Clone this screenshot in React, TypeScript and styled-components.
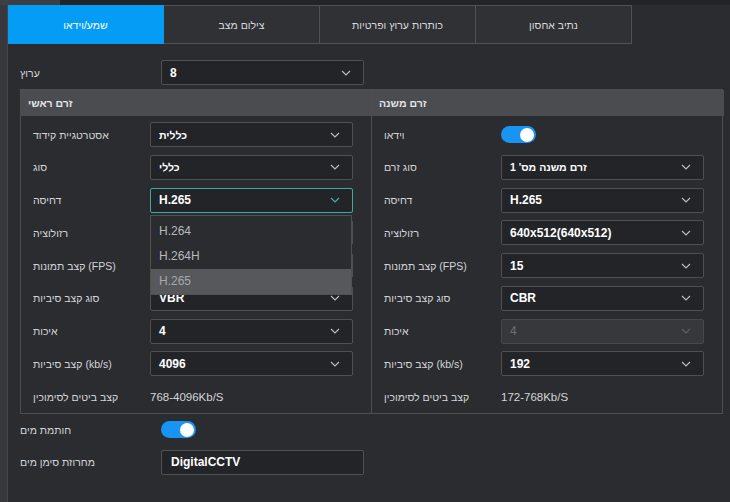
import React from "react";
import styled, { createGlobalStyle, css } from "styled-components";

const GlobalStyle = createGlobalStyle`
  html, body {
    margin: 0;
    padding: 0;
    background: #2a2c30;
  }
  body {
    font-family: "Liberation Sans", Arial, sans-serif;
    font-size: 10.5px;
    color: #d4d5d7;
  }
`;

const Page = styled.div`
  width: 730px;
  height: 502px;
  display: flex;
  flex-direction: column;
  overflow: hidden;
`;

const TopStrip = styled.div`
  height: 5px;
  flex: none;
  display: flex;
  background: #232427;
`;

const TopStripLeft = styled.div`
  width: 60px;
  background: #3c3e42;
`;

const Body = styled.div`
  flex: 1;
  display: flex;
`;

const SideStrip = styled.div`
  width: 7px;
  flex: none;
  background: #36383c;
  border-right: 1px solid #44464a;
`;

const Main = styled.div`
  flex: 1;
  display: flex;
  flex-direction: column;
`;

const Tabs = styled.div`
  display: flex;
  height: 39px;
`;

const Tab = styled.div<{ $active?: boolean }>`
  width: 156px;
  box-sizing: border-box;
  display: flex;
  align-items: center;
  justify-content: center;
  color: #d8d9db;
  font-size: 10.5px;
  background: #2f3135;
  border: 1px solid #505256;
  border-left: none;
  ${(p) =>
    p.$active &&
    css`
      background: #049cf5;
      color: #ffffff;
      border-color: #049cf5;
    `}
`;

const Content = styled.div`
  padding: 16px 0 0 12px;
  display: flex;
  flex-direction: column;
`;

const TopRow = styled.div`
  display: grid;
  grid-template-columns: 141px 203px;
  align-items: center;
  height: 25px;
`;

const Label = styled.span`
  color: #d4d5d7;
  font-size: 10.5px;
`;

const Panels = styled.div`
  margin-top: 4px;
  display: grid;
  grid-template-columns: 351px 352px;
  width: 703px;
  border: 1px solid #4c4e52;
  box-sizing: border-box;
`;

const Panel = styled.div<{ $last?: boolean }>`
  display: flex;
  flex-direction: column;
  border-right: ${(p) => (p.$last ? "none" : "1px solid #4c4e52")};
`;

const PanelHeader = styled.div`
  height: 26px;
  background: #4a4c50;
  display: flex;
  align-items: center;
  padding-left: 7px;
`;

const PanelTitle = styled.span`
  color: #e4e5e7;
  font-size: 10.5px;
  font-weight: bold;
`;

const PanelBody = styled.div`
  padding: 6px 0 4px 12px;
  display: grid;
  grid-template-columns: 117px 203px;
  grid-auto-rows: 25px;
  row-gap: 7.75px;
  align-items: center;
`;

const SelectBox = styled.div<{ $focused?: boolean; $disabled?: boolean; $he?: boolean }>`
  position: relative;
  height: 25px;
  box-sizing: border-box;
  display: flex;
  align-items: center;
  justify-content: space-between;
  padding: 0 12px 0 8px;
  background: #232428;
  border: 1px solid #4e5054;
  border-radius: 2px;
  color: #ffffff;
  font-weight: bold;
  font-size: ${(p) => (p.$he ? "10.5px" : "12px")};
  ${(p) =>
    p.$focused &&
    css`
      border-color: #3fa8a3;
    `}
  ${(p) =>
    p.$disabled &&
    css`
      background: #36383c;
      color: #6e7074;
      font-weight: normal;
      border-color: #46484c;
    `}
`;

const ValueText = styled.span``;

const Menu = styled.div`
  position: absolute;
  top: 26px;
  left: -1px;
  width: 202px;
  box-sizing: border-box;
  background: #2a2c30;
  border: 1px solid #4e5054;
  padding-top: 3px;
  z-index: 2;
  font-weight: normal;
`;

const MenuItem = styled.div<{ $selected?: boolean }>`
  height: 25px;
  display: flex;
  align-items: center;
  padding-left: 8px;
  font-size: 12px;
  background: ${(p) => (p.$selected ? "#56585c" : "transparent")};
  color: ${(p) => (p.$selected ? "#a8aaad" : "#b8babd")};
`;

const InfoText = styled.span`
  color: #d4d5d7;
  font-size: 11.5px;
`;

const ToggleTrack = styled.div`
  width: 35px;
  height: 17px;
  border-radius: 9px;
  background: #1894f2;
  position: relative;
`;

const ToggleKnob = styled.div`
  position: absolute;
  right: 2px;
  top: 1.5px;
  width: 14px;
  height: 14px;
  border-radius: 50%;
  background: #ffffff;
`;

const Bottom = styled.div`
  padding-top: 3px;
  display: grid;
  grid-template-columns: 141px 203px;
  grid-auto-rows: 25px;
  row-gap: 7.5px;
  align-items: center;
`;

const TextInput = styled.div`
  height: 25px;
  box-sizing: border-box;
  display: flex;
  align-items: center;
  padding-left: 9px;
  background: #232428;
  border: 1px solid #4e5054;
  border-radius: 2px;
  color: #ffffff;
  font-weight: bold;
  font-size: 12px;
`;

const Chevron: React.FC<{ color?: string }> = ({ color = "#b9bbbe" }) => (
  <svg width="10" height="6" viewBox="0 0 10 6">
    <path d="M1 1 L5 5 L9 1" fill="none" stroke={color} strokeWidth="1.2" />
  </svg>
);

type SelectProps = {
  value: string;
  focused?: boolean;
  disabled?: boolean;
  he?: boolean;
  options?: string[];
};

const Select: React.FC<SelectProps> = ({ value, focused, disabled, he, options }) => (
  <SelectBox $focused={focused} $disabled={disabled} $he={he}>
    <ValueText>{value}</ValueText>
    <Chevron color={focused ? "#3fb0aa" : disabled ? "#5e6064" : "#b9bbbe"} />
    {options && (
      <Menu>
        {options.map((o) => (
          <MenuItem key={o} $selected={o === value}>
            {o}
          </MenuItem>
        ))}
      </Menu>
    )}
  </SelectBox>
);

const Toggle = () => (
  <ToggleTrack>
    <ToggleKnob />
  </ToggleTrack>
);

const tabs = ["שמע/וידאו", "צילום מצב", "כותרות ערוץ ופרטיות", "נתיב אחסון"];

export default function App() {
  return (
    <Page>
      <GlobalStyle />
      <TopStrip>
        <TopStripLeft />
      </TopStrip>
      <Body>
        <SideStrip />
        <Main>
          <Tabs>
            {tabs.map((t, i) => (
              <Tab key={t} $active={i === 0}>
                {t}
              </Tab>
            ))}
          </Tabs>
          <Content>
            <TopRow>
              <Label>ערוץ</Label>
              <Select value="8" />
            </TopRow>
            <Panels>
              <Panel>
                <PanelHeader>
                  <PanelTitle>זרם ראשי</PanelTitle>
                </PanelHeader>
                <PanelBody>
                  <Label>אסטרטגיית קידוד</Label>
                  <Select value="כללית" he />
                  <Label>סוג</Label>
                  <Select value="כללי" he />
                  <Label>דחיסה</Label>
                  <Select value="H.265" focused options={["H.264", "H.264H", "H.265"]} />
                  <Label>רזולוציה</Label>
                  <Select value="640x512(640x512)" />
                  <Label>קצב תמונות (FPS)</Label>
                  <Select value="25" />
                  <Label>סוג קצב סיביות</Label>
                  <Select value="VBR" />
                  <Label>איכות</Label>
                  <Select value="4" />
                  <Label>קצב סיביות (kb/s)</Label>
                  <Select value="4096" />
                  <Label>קצב ביטים לסימוכין</Label>
                  <InfoText>768-4096Kb/S</InfoText>
                </PanelBody>
              </Panel>
              <Panel $last>
                <PanelHeader>
                  <PanelTitle>זרם משנה</PanelTitle>
                </PanelHeader>
                <PanelBody>
                  <Label>וידאו</Label>
                  <Toggle />
                  <Label>סוג זרם</Label>
                  <Select value="זרם משנה מס' 1" he />
                  <Label>דחיסה</Label>
                  <Select value="H.265" />
                  <Label>רזולוציה</Label>
                  <Select value="640x512(640x512)" />
                  <Label>קצב תמונות (FPS)</Label>
                  <Select value="15" />
                  <Label>סוג קצב סיביות</Label>
                  <Select value="CBR" />
                  <Label>איכות</Label>
                  <Select value="4" disabled />
                  <Label>קצב סיביות (kb/s)</Label>
                  <Select value="192" />
                  <Label>קצב ביטים לסימוכין</Label>
                  <InfoText>172-768Kb/S</InfoText>
                </PanelBody>
              </Panel>
            </Panels>
            <Bottom>
              <Label>חותמת מים</Label>
              <Toggle />
              <Label>מחרוזת סימן מים</Label>
              <TextInput>DigitalCCTV</TextInput>
            </Bottom>
          </Content>
        </Main>
      </Body>
    </Page>
  );
}
